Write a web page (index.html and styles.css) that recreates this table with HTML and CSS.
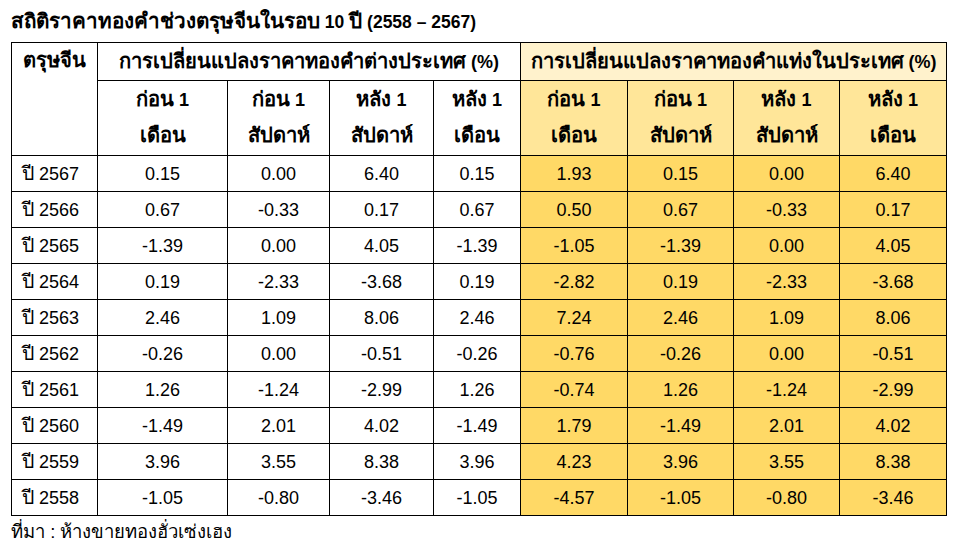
FILE: index.html
```html
<!DOCTYPE html>
<html lang="th">
<head>
<meta charset="utf-8">
<link rel="stylesheet" href="styles.css">
</head>
<body>
<div class="page">
  <h1 class="title"><span class="th">สถิติราคาทองคำช่วงตรุษจีนในรอบ</span> 10 <span class="th">ปี</span> (2558 – 2567)</h1>
  <table class="stats">
    <colgroup>
      <col class="c0"><col class="c1"><col class="c2"><col class="c3"><col class="c4">
      <col class="c5"><col class="c6"><col class="c7"><col class="c8">
    </colgroup>
    <thead>
      <tr class="h1">
        <th rowspan="2" class="corner"><span class="th">ตรุษจีน</span></th>
        <th colspan="4" class="grp"><span class="th">การเปลี่ยนแปลงราคาทองคำต่างประเทศ</span> (%)</th>
        <th colspan="4" class="grp gold-light"><span class="th">การเปลี่ยนแปลงราคาทองคำแท่งในประเทศ</span> (%)</th>
      </tr>
      <tr class="h2">
        <th><span class="th">ก่อน</span> 1<br><span class="th">เดือน</span></th>
        <th><span class="th">ก่อน</span> 1<br><span class="th">สัปดาห์</span></th>
        <th><span class="th">หลัง</span> 1<br><span class="th">สัปดาห์</span></th>
        <th><span class="th">หลัง</span> 1<br><span class="th">เดือน</span></th>
        <th class="gold-mid"><span class="th">ก่อน</span> 1<br><span class="th">เดือน</span></th>
        <th class="gold-mid"><span class="th">ก่อน</span> 1<br><span class="th">สัปดาห์</span></th>
        <th class="gold-mid"><span class="th">หลัง</span> 1<br><span class="th">สัปดาห์</span></th>
        <th class="gold-mid"><span class="th">หลัง</span> 1<br><span class="th">เดือน</span></th>
      </tr>
    </thead>
    <tbody>
      <tr><td class="yr"><span class="th">ปี</span> 2567</td><td>0.15</td><td>0.00</td><td>6.40</td><td>0.15</td><td class="gold">1.93</td><td class="gold">0.15</td><td class="gold">0.00</td><td class="gold">6.40</td></tr>
      <tr><td class="yr"><span class="th">ปี</span> 2566</td><td>0.67</td><td>-0.33</td><td>0.17</td><td>0.67</td><td class="gold">0.50</td><td class="gold">0.67</td><td class="gold">-0.33</td><td class="gold">0.17</td></tr>
      <tr><td class="yr"><span class="th">ปี</span> 2565</td><td>-1.39</td><td>0.00</td><td>4.05</td><td>-1.39</td><td class="gold">-1.05</td><td class="gold">-1.39</td><td class="gold">0.00</td><td class="gold">4.05</td></tr>
      <tr><td class="yr"><span class="th">ปี</span> 2564</td><td>0.19</td><td>-2.33</td><td>-3.68</td><td>0.19</td><td class="gold">-2.82</td><td class="gold">0.19</td><td class="gold">-2.33</td><td class="gold">-3.68</td></tr>
      <tr><td class="yr"><span class="th">ปี</span> 2563</td><td>2.46</td><td>1.09</td><td>8.06</td><td>2.46</td><td class="gold">7.24</td><td class="gold">2.46</td><td class="gold">1.09</td><td class="gold">8.06</td></tr>
      <tr><td class="yr"><span class="th">ปี</span> 2562</td><td>-0.26</td><td>0.00</td><td>-0.51</td><td>-0.26</td><td class="gold">-0.76</td><td class="gold">-0.26</td><td class="gold">0.00</td><td class="gold">-0.51</td></tr>
      <tr><td class="yr"><span class="th">ปี</span> 2561</td><td>1.26</td><td>-1.24</td><td>-2.99</td><td>1.26</td><td class="gold">-0.74</td><td class="gold">1.26</td><td class="gold">-1.24</td><td class="gold">-2.99</td></tr>
      <tr><td class="yr"><span class="th">ปี</span> 2560</td><td>-1.49</td><td>2.01</td><td>4.02</td><td>-1.49</td><td class="gold">1.79</td><td class="gold">-1.49</td><td class="gold">2.01</td><td class="gold">4.02</td></tr>
      <tr><td class="yr"><span class="th">ปี</span> 2559</td><td>3.96</td><td>3.55</td><td>8.38</td><td>3.96</td><td class="gold">4.23</td><td class="gold">3.96</td><td class="gold">3.55</td><td class="gold">8.38</td></tr>
      <tr><td class="yr"><span class="th">ปี</span> 2558</td><td>-1.05</td><td>-0.80</td><td>-3.46</td><td>-1.05</td><td class="gold">-4.57</td><td class="gold">-1.05</td><td class="gold">-0.80</td><td class="gold">-3.46</td></tr>
    </tbody>
  </table>
  <p class="source">ที่มา : ห้างขายทองฮั่วเซ่งเฮง</p>
</div>
</body>
</html>
```

FILE: styles.css
```css
html, body {
  margin: 0;
  padding: 0;
  background: #ffffff;
}
body {
  font-family: "Liberation Sans", Arial, sans-serif;
  color: #000000;
}
.page {
  padding: 10px 11px 0 11px;
}
.title {
  margin: 0 0 8px 0;
  font-size: 17.5px;
  font-weight: bold;
  line-height: 24px;
  height: 24px;
}
.title .th {
  font-size: 1.18em;
  line-height: 10px;
}
.stats {
  border-collapse: collapse;
  table-layout: fixed;
  width: 936px;
  font-size: 18px;
}
.c0 { width: 86px; }
.c1 { width: 130px; }
.c2 { width: 102px; }
.c3 { width: 104px; }
.c4 { width: 87px; }
.c5 { width: 107px; }
.c6 { width: 106px; }
.c7 { width: 106px; }
.c8 { width: 107px; }
.stats th, .stats td {
  border: 1px solid #000000;
  padding: 0;
  text-align: center;
  vertical-align: middle;
}
.stats th {
  font-weight: bold;
  line-height: 36px;
}
.stats th .th {
  font-size: 1.12em;
  line-height: 10px;
}
.h1 th { height: 37px; }
.h2 th { height: 74px; }
.stats th.corner {
  vertical-align: top;
}
.stats td {
  height: 35px;
  line-height: 20px;
}
.stats td.yr {
  text-align: left;
  padding-left: 10px;
}
.stats td .th {
  font-size: 1.08em;
  line-height: 10px;
}
.gold-light { background: #fff2cc; }
.gold-mid { background: #ffe699; }
.gold { background: #ffd966; }
.source {
  margin: 4px 0 0 0;
  font-size: 18.5px;
  line-height: 24px;
}
```
